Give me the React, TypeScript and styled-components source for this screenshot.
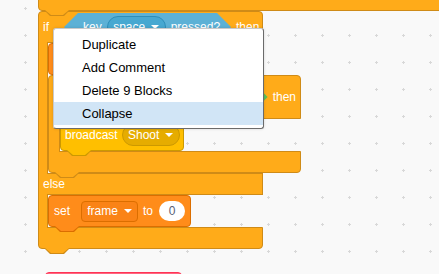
import styled, { createGlobalStyle, css } from 'styled-components'

type Tone = { fill: string; edge: string }

const control: Tone = { fill: '#ffab19', edge: '#cf8b17' }
const data: Tone = { fill: '#ff8c1a', edge: '#db6e00' }
const dataField: Tone = { fill: '#fa8316', edge: '#db6e00' }
const events: Tone = { fill: '#ffbf00', edge: '#cc9900' }
const eventsField: Tone = { fill: '#e6ac00', edge: '#cc9900' }
const sensingField: Tone = { fill: '#47a8d1', edge: '#2e8eb8' }
const custom: Tone = { fill: '#ff6680', edge: '#ff3355' }

const GlobalStyle = createGlobalStyle`
  html, body {
    margin: 0;
    padding: 0;
  }
  body {
    background: #f9f9f9;
    font-family: 'Liberation Sans', Arial, Helvetica, sans-serif;
  }
`

const Workspace = styled.div`
  position: relative;
  width: 439px;
  height: 274px;
  overflow: hidden;
  background-color: #f9f9f9;
  background-image: radial-gradient(circle, #d8d8d8 1px, transparent 1.4px);
  background-size: 27px 27px;
  background-position: 12px -5px;
`

// scripts sit on the free canvas at their own coordinates
const Script = styled.div<{ $x: number; $y: number }>`
  position: absolute;
  left: ${(p) => p.$x}px;
  top: ${(p) => p.$y}px;
  display: flex;
  flex-direction: column;
  align-items: flex-start;
`

// the little tab under a block that fits the notch of the next one
const tabbed = css<{ $tone: Tone }>`
  &::before,
  &::after {
    content: '';
    position: absolute;
    z-index: 2;
    top: 100%;
    clip-path: polygon(0 0, 100% 0, calc(100% - 6px) 100%, 6px 100%);
  }
  &::before {
    left: 5px;
    width: 26px;
    height: 6px;
    background: ${(p) => p.$tone.edge};
  }
  &::after {
    left: 6px;
    width: 24px;
    height: 5px;
    background: ${(p) => p.$tone.fill};
  }
`

const StackBlock = styled.div<{ $tone: Tone; $w: number; $h?: number; $tab?: boolean }>`
  position: relative;
  flex: none;
  box-sizing: border-box;
  width: ${(p) => p.$w}px;
  height: ${(p) => p.$h ?? 32}px;
  display: flex;
  align-items: center;
  padding: 0 5px 0 4px;
  background: ${(p) => p.$tone.fill};
  border: 1px solid ${(p) => p.$tone.edge};
  border-radius: 4px;
  ${(p) => p.$tab && tabbed}
`

const CBlock = styled.div`
  display: flex;
  flex-direction: column;
  align-items: flex-start;
`

const CHead = styled.div<{ $tone: Tone; $w: number; $h: number; $end?: boolean }>`
  position: relative;
  box-sizing: border-box;
  width: ${(p) => p.$w}px;
  height: ${(p) => p.$h}px;
  display: flex;
  align-items: center;
  justify-content: ${(p) => (p.$end ? 'flex-end' : 'flex-start')};
  padding: 0 4px;
  background: ${(p) => p.$tone.fill};
  border: 1px solid ${(p) => p.$tone.edge};
  border-radius: 4px 4px 0 0;
`

const CMouth = styled.div`
  display: flex;
`

const CWall = styled.div<{ $tone: Tone; $w: number }>`
  position: relative;
  z-index: 1;
  flex: none;
  box-sizing: border-box;
  width: ${(p) => p.$w}px;
  margin: -1px 0;
  background: ${(p) => p.$tone.fill};
  border-left: 1px solid ${(p) => p.$tone.edge};
  border-right: 1px solid ${(p) => p.$tone.edge};
`

const CInner = styled.div`
  display: flex;
  flex-direction: column;
  align-items: flex-start;
`

const CArm = styled.div<{ $tone: Tone; $w: number; $last?: boolean; $tab?: boolean }>`
  position: relative;
  box-sizing: border-box;
  width: ${(p) => p.$w}px;
  height: 22px;
  display: flex;
  align-items: center;
  padding: 0 4px;
  background: ${(p) => p.$tone.fill};
  border: 1px solid ${(p) => p.$tone.edge};
  border-radius: ${(p) => (p.$last ? '0 0 4px 4px' : '0')};
  ${(p) => p.$tab && tabbed}
`

const Label = styled.span<{ $ml?: number; $mr?: number }>`
  flex: none;
  margin-left: ${(p) => p.$ml ?? 0}px;
  margin-right: ${(p) => p.$mr ?? 0}px;
  color: #fff;
  font-size: 12px;
  line-height: 14px;
  white-space: nowrap;
`

const Hex = styled.div<{ $fill: string; $w: number; $h: number; $ml?: number; $mr?: number }>`
  flex: none;
  box-sizing: border-box;
  width: ${(p) => p.$w}px;
  height: ${(p) => p.$h}px;
  margin-left: ${(p) => p.$ml ?? 0}px;
  margin-right: ${(p) => p.$mr ?? 0}px;
  display: flex;
  align-items: center;
  gap: 5px;
  padding: 0 12px 0 19px;
  background: ${(p) => p.$fill};
  clip-path: polygon(
    ${(p) => p.$h / 2}px 0,
    calc(100% - ${(p) => p.$h / 2}px) 0,
    100% 50%,
    calc(100% - ${(p) => p.$h / 2}px) 100%,
    ${(p) => p.$h / 2}px 100%,
    0 50%
  );
`

const Dropdown = styled.span<{ $tone: Tone; $round?: boolean; $w: number; $ml?: number }>`
  flex: none;
  box-sizing: border-box;
  width: ${(p) => p.$w}px;
  height: ${(p) => (p.$round ? 22 : 21)}px;
  margin-left: ${(p) => p.$ml ?? 0}px;
  display: inline-flex;
  align-items: center;
  justify-content: center;
  gap: 6px;
  background: ${(p) => p.$tone.fill};
  border: 1px solid ${(p) => p.$tone.edge};
  border-radius: ${(p) => (p.$round ? '11px' : '4px')};
  color: #fff;
  font-size: 12px;
  white-space: nowrap;
`

const Caret = styled.span`
  width: 0;
  height: 0;
  border-left: 4px solid transparent;
  border-right: 4px solid transparent;
  border-top: 4px solid #fff;
`

const NumberSlot = styled.span`
  flex: none;
  width: 26px;
  height: 20px;
  border-radius: 10px;
  background: #fff;
  display: flex;
  align-items: center;
  justify-content: center;
  color: #575e75;
  font-size: 12px;
`

const Menu = styled.ul`
  position: absolute;
  z-index: 10;
  left: 53px;
  top: 28px;
  box-sizing: border-box;
  width: 211px;
  height: 101px;
  margin: 0;
  padding: 4px 0 3px;
  list-style: none;
  background: #fff;
  border: 1px solid;
  border-color: #c9c9c9 #6b6b6b #6b6b6b #c9c9c9;
  border-radius: 3px;
  box-shadow: 0 0 3px rgba(0, 0, 0, 0.15);
  font-size: 13px;
  color: #000;
`

const MenuItem = styled.li<{ $active?: boolean }>`
  height: 23px;
  line-height: 23px;
  padding-left: 28px;
  background: ${(p) => (p.$active ? '#d1e5f6' : 'transparent')};
`

const menuItems = ['Duplicate', 'Add Comment', 'Delete 9 Blocks', 'Collapse']

export default function App() {
  return (
    <>
      <GlobalStyle />
      <Workspace>
        <Script $x={38} $y={-21}>
          <StackBlock $tone={control} $w={420} $tab />
          <CBlock>
            <CHead $tone={control} $w={225} $h={32}>
              <Label>if</Label>
              <Hex $fill="#5cb1d6" $w={167} $h={28} $ml={15} $mr={5}>
                <Label>key</Label>
                <Dropdown $tone={sensingField} $round $w={59}>
                  space <Caret />
                </Dropdown>
                <Label>pressed?</Label>
              </Hex>
              <Label>then</Label>
            </CHead>
            <CMouth>
              <CWall $tone={control} $w={10} />
              <CInner>
                <StackBlock $tone={data} $w={180} $tab />
                <CBlock>
                  <CHead $tone={control} $w={253} $h={44} $end>
                    <Hex $fill="#59c059" $w={190} $h={34} $mr={5} />
                    <Label>then</Label>
                  </CHead>
                  <CMouth>
                    <CWall $tone={control} $w={12} />
                    <CInner>
                      <StackBlock $tone={events} $w={124} $tab>
                        <Label $mr={4}>broadcast</Label>
                        <Dropdown $tone={eventsField} $round $w={58}>
                          Shoot <Caret />
                        </Dropdown>
                      </StackBlock>
                    </CInner>
                  </CMouth>
                  <CArm $tone={control} $w={253} $last $tab />
                </CBlock>
              </CInner>
            </CMouth>
            <CArm $tone={control} $w={225}>
              <Label>else</Label>
            </CArm>
            <CMouth>
              <CWall $tone={control} $w={10} />
              <CInner>
                <StackBlock $tone={data} $w={143} $tab>
                  <Label $ml={1} $mr={11}>set</Label>
                  <Dropdown $tone={dataField} $w={57}>
                    frame <Caret />
                  </Dropdown>
                  <Label $ml={5} $mr={6}>to</Label>
                  <NumberSlot>0</NumberSlot>
                </StackBlock>
              </CInner>
            </CMouth>
            <CArm $tone={control} $w={225} $last $tab />
          </CBlock>
        </Script>

        <Script $x={45} $y={272}>
          <StackBlock $tone={custom} $w={137} />
        </Script>

        <Menu>
          {menuItems.map((item) => (
            <MenuItem key={item} $active={item === 'Collapse'}>
              {item}
            </MenuItem>
          ))}
        </Menu>
      </Workspace>
    </>
  )
}
